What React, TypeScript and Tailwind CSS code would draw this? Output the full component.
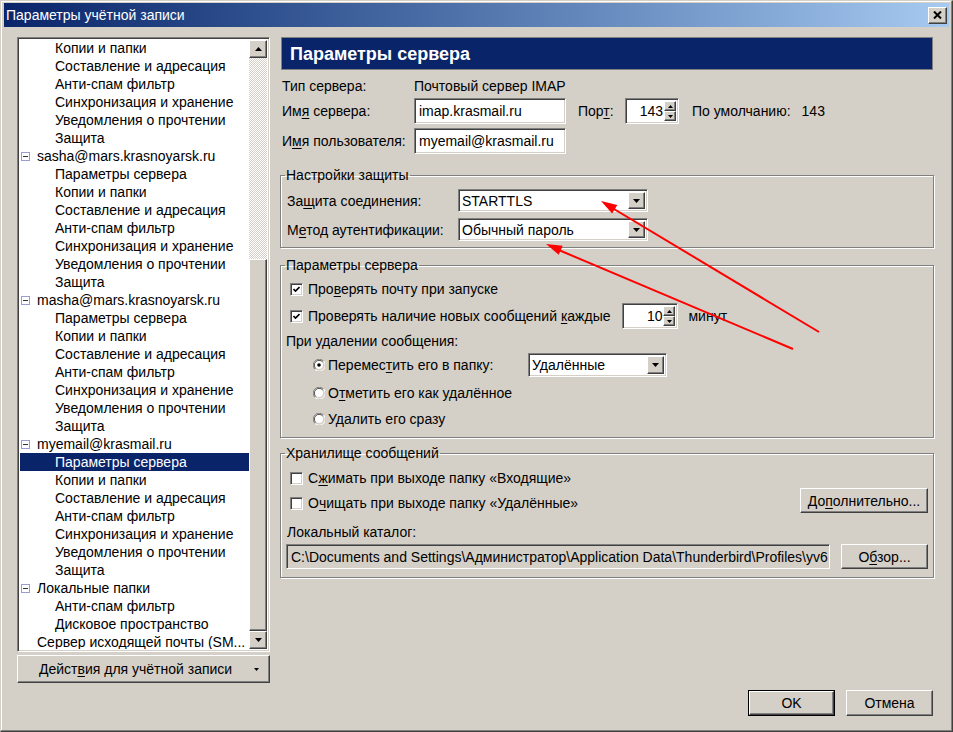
import React from 'react';

const raised =
  'border border-t-white border-l-white border-r-[#404040] border-b-[#404040] shadow-[inset_-1px_-1px_0_#808080,inset_1px_1px_0_#d4d0c8]';
const sunken =
  'border border-t-[#808080] border-l-[#808080] border-r-white border-b-white shadow-[inset_1px_1px_0_#404040,inset_-1px_-1px_0_#d4d0c8]';

function U({ children }: { children: React.ReactNode }) {
  return <span className="underline underline-offset-2">{children}</span>;
}

type TreeItem = { text: string; level: 0 | 1 | 2; box?: boolean; selected?: boolean };

const children = [
  'Параметры сервера',
  'Копии и папки',
  'Составление и адресация',
  'Анти-спам фильтр',
  'Синхронизация и хранение',
  'Уведомления о прочтении',
  'Защита',
];

const tree: TreeItem[] = [
  ...children.slice(1).map((t) => ({ text: t, level: 2 as const })),
  { text: 'sasha@mars.krasnoyarsk.ru', level: 1, box: true },
  ...children.map((t) => ({ text: t, level: 2 as const })),
  { text: 'masha@mars.krasnoyarsk.ru', level: 1, box: true },
  ...children.map((t) => ({ text: t, level: 2 as const })),
  { text: 'myemail@krasmail.ru', level: 1, box: true },
  ...children.map((t, i) => ({ text: t, level: 2 as const, selected: i === 0 })),
  { text: 'Локальные папки', level: 1, box: true },
  { text: 'Анти-спам фильтр', level: 2 },
  { text: 'Дисковое пространство', level: 2 },
  { text: 'Сервер исходящей почты (SM...', level: 1 },
];

function Triangle({ up, small }: { up?: boolean; small?: boolean }) {
  const w = small ? 5 : 7;
  const h = small ? 3 : 4;
  return (
    <svg width={w} height={h} viewBox={`0 0 ${w} ${h}`} className="block">
      <polygon points={up ? `0,${h} ${w},${h} ${w / 2},0` : `0,0 ${w},0 ${w / 2},${h}`} fill="#000" />
    </svg>
  );
}

function Select({ value, className }: { value: string; className: string }) {
  return (
    <div className={`${sunken} ${className} bg-white flex items-stretch p-[2px]`}>
      <div className="flex-1 flex items-center pl-[1px] truncate">{value}</div>
      <div className={`${raised} w-[17px] bg-[#d4d0c8] flex items-center justify-center`}>
        <Triangle />
      </div>
    </div>
  );
}

function Spin({ value, className }: { value: string; className: string }) {
  return (
    <div className={`${sunken} ${className} bg-white flex items-stretch p-[2px]`}>
      <div className="flex-1 flex items-center justify-end pr-[1px]">{value}</div>
      <div className="w-[12px] flex flex-col">
        <div className={`${raised} flex-1 bg-[#d4d0c8] flex items-center justify-center`}>
          <Triangle up small />
        </div>
        <div className={`${raised} flex-1 bg-[#d4d0c8] flex items-center justify-center`}>
          <Triangle small />
        </div>
      </div>
    </div>
  );
}

function Checkbox({ checked }: { checked?: boolean }) {
  return (
    <div className={`${sunken} w-[13px] h-[13px] bg-white flex items-center justify-center shrink-0`}>
      {checked && (
        <svg width="7" height="7" viewBox="0 0 7 7">
          <path d="M0.5 3 L2.5 5 L6.5 1" stroke="#000" strokeWidth="1.6" fill="none" />
        </svg>
      )}
    </div>
  );
}

function Radio({ checked }: { checked?: boolean }) {
  return (
    <svg width="12" height="12" viewBox="0 0 12 12" className="shrink-0">
      <path d="M10.5 2 A5.5 5.5 0 0 0 2 10.5" stroke="#808080" fill="none" />
      <path d="M2 10.5 A5.5 5.5 0 0 0 10.5 2" stroke="#fff" fill="none" />
      <path d="M9.6 2.9 A4.4 4.4 0 0 0 2.9 9.6" stroke="#404040" fill="none" />
      <circle cx="6" cy="6" r="4" fill="#fff" />
      {checked && <circle cx="6" cy="6" r="1.8" fill="#000" />}
    </svg>
  );
}

function Button({ children, className }: { children: React.ReactNode; className: string }) {
  return (
    <div className={`${raised} ${className} bg-[#d4d0c8] flex items-center justify-center`}>{children}</div>
  );
}

function Group({ title, children, className }: { title: string; children: React.ReactNode; className?: string }) {
  return (
    <fieldset
      className={`border border-[#808080] shadow-[inset_1px_1px_0_#fff,1px_1px_0_#fff] pl-[6px] pr-[5px] ${className ?? ''}`}
    >
      <legend className="-ml-[2px] px-[1px] leading-[16px]">{title}</legend>
      {children}
    </fieldset>
  );
}

function arrowHead(tx: number, ty: number, px: number, py: number) {
  const dx = px - tx;
  const dy = py - ty;
  const len = Math.hypot(dx, dy);
  const ux = dx / len;
  const uy = dy / len;
  const bx = px - ux * 16;
  const by = py - uy * 16;
  const nx = -uy * 5;
  const ny = ux * 5;
  return `${px},${py} ${bx + nx},${by + ny} ${bx - nx},${by - ny}`;
}

export default function App() {
  return (
    <div className="relative w-[953px] h-[732px] bg-[#d4d0c8] border border-t-[#d4d0c8] border-l-[#d4d0c8] border-r-[#404040] border-b-[#404040] shadow-[inset_-1px_-1px_0_#808080,inset_1px_1px_0_#fff] px-[3px] pt-[2px] font-['Liberation_Sans',Arial,sans-serif] text-[14px] text-black leading-[16px] overflow-hidden">
      {/* title bar */}
      <div className="h-[24px] bg-linear-to-r from-[#0a246a] to-[#a6caf0] flex items-center pl-[2px] pr-[2px]">
        <span className="text-white text-[14px]">Параметры учётной записи</span>
        <div className={`${raised} ml-auto w-[19px] h-[17px] bg-[#d4d0c8] flex items-center justify-center`}>
          <svg width="9" height="8" viewBox="0 0 9 8">
            <path d="M1 0.5 L8 7.5 M8 0.5 L1 7.5" stroke="#000" strokeWidth="2" />
          </svg>
        </div>
      </div>

      <div className="flex pt-[10px] pl-[13px] gap-[10px]">
        {/* left column */}
        <div className="w-[253px] flex flex-col">
          <div className={`${sunken} h-[615px] bg-white p-[2px] flex`}>
            <div className="flex-1 flex flex-col -mt-[1px] overflow-hidden">
              {tree.map((it, i) => (
                <div
                  key={i}
                  className={`h-[18px] shrink-0 flex items-center whitespace-nowrap ${
                    it.selected ? 'bg-[#0a246a] text-white' : ''
                  } ${it.level === 2 ? 'pl-[35px]' : it.box ? 'pl-[1px]' : 'pl-[17px]'}`}
                >
                  {it.box && (
                    <div className="w-[9px] h-[9px] border border-[#9c9cd6] bg-white mr-[7px] flex items-center justify-center">
                      <div className="w-[5px] h-[1px] bg-[#333]" />
                    </div>
                  )}
                  {it.text}
                </div>
              ))}
            </div>
            <div className="w-[18px] flex flex-col">
              <div className={`${raised} h-[18px] bg-[#d4d0c8] flex items-center justify-center`}>
                <Triangle up />
              </div>
              <div className="h-[201px] bg-[repeating-conic-gradient(#ffffff_0%_25%,#d4d0c8_0%_50%)] bg-[length:2px_2px]" />
              <div className={`${raised} flex-1 bg-[#d4d0c8]`} />
              <div className={`${raised} h-[18px] bg-[#d4d0c8] flex items-center justify-center`}>
                <Triangle />
              </div>
            </div>
          </div>
          <div className={`${raised} mt-[3px] h-[28px] bg-[#d4d0c8] flex items-center pl-[21px] pr-[10px]`}>
            <span>
              Дейст<U>в</U>ия для учётной записи
            </span>
            <span className="ml-auto">
              <Triangle small />
            </span>
          </div>
        </div>

        {/* right column */}
        <div className="w-[654px] h-[679px] flex flex-col">
          <div className="ml-[1px] w-[652px] h-[33px] bg-[#0a246a] border border-[#808080] flex items-center pl-[8px]">
            <span className="text-white font-bold text-[18px]">Параметры сервера</span>
          </div>

          <div className="mt-[8px] pl-[2px] flex items-center h-[16px]">
            <span className="w-[132px]">Тип сервера:</span>
            <span>Почтовый сервер IMAP</span>
          </div>
          <div className="mt-[4px] pl-[2px] flex items-center h-[26px]">
            <span className="w-[132px]">
              Им<U>я</U> сервера:
            </span>
            <div className={`${sunken} w-[152px] h-[26px] bg-white flex items-center pl-[4px]`}>imap.krasmail.ru</div>
            <span className="ml-[12px] w-[47px]">
              Пор<U>т</U>:
            </span>
            <Spin value="143" className="w-[54px] h-[26px]" />
            <span className="ml-[13px]">По умолчанию:</span>
            <span className="ml-[11px]">143</span>
          </div>
          <div className="mt-[4px] pl-[2px] flex items-center h-[26px]">
            <span className="w-[132px]">
              И<U>м</U>я пользователя:
            </span>
            <div className={`${sunken} w-[152px] h-[26px] bg-white flex items-center pl-[4px]`}>myemail@krasmail.ru</div>
          </div>

          <Group title="Настройки защиты" className="mt-[13px] pb-[6px]">
            <div className="mt-[6px] flex items-center h-[23px]">
              <span className="w-[171px]">
                За<U>щ</U>ита соединения:
              </span>
              <Select value="STARTTLS" className="w-[190px] h-[23px]" />
            </div>
            <div className="mt-[6px] flex items-center h-[23px]">
              <span className="w-[171px]">
                М<U>е</U>тод аутентификации:
              </span>
              <Select value="Обычный пароль" className="w-[190px] h-[23px]" />
            </div>
          </Group>

          <Group title="Параметры сервера" className="mt-[9px] pb-[8px]">
            <div className="mt-[6px] h-[20px] flex items-center gap-[5px] pl-[3px]">
              <Checkbox checked />
              <span>
                Про<U>в</U>ерять почту при запуске
              </span>
            </div>
            <div className="mt-[4px] h-[26px] flex items-center pl-[3px]">
              <Checkbox checked />
              <span className="ml-[5px]">
                Проверять наличие новых сообщений <U>к</U>аждые
              </span>
              <Spin value="10" className="ml-[12px] w-[56px] h-[26px]" />
              <span className="ml-[10px]">минут</span>
            </div>
            <div className="mt-[4px] h-[16px] flex items-center -ml-[1px]">При удалении сообщения:</div>
            <div className="mt-[4px] h-[24px] flex items-center pl-[26px]">
              <Radio checked />
              <span className="ml-[3px] w-[200px]">
                Перемес<U>т</U>ить его в папку:
              </span>
              <Select value="Удалённые" className="w-[139px] h-[24px]" />
            </div>
            <div className="mt-[6px] h-[20px] flex items-center pl-[26px] gap-[3px]">
              <Radio />
              <span>
                О<U>т</U>метить его как удалённое
              </span>
            </div>
            <div className="mt-[6px] h-[20px] flex items-center pl-[26px] gap-[3px]">
              <Radio />
              <span>
                У<U>д</U>алить его сразу
              </span>
            </div>
          </Group>

          <Group title="Хранилище сообщений" className="mt-[7px] pb-[8px]">
            <div className="mt-[7px] flex">
              <div className="flex flex-col">
                <div className="h-[20px] flex items-center gap-[5px] pl-[3px]">
                  <Checkbox />
                  <span>
                    С<U>ж</U>имать при выходе папку «Входящие»
                  </span>
                </div>
                <div className="mt-[5px] h-[20px] flex items-center gap-[5px] pl-[3px]">
                  <Checkbox />
                  <span>
                    О<U>ч</U>ищать при выходе папку «Удалённые»
                  </span>
                </div>
              </div>
              <Button className="ml-auto self-end w-[128px] h-[25px]">
                <span>
                  До<U>п</U>олнительно...
                </span>
              </Button>
            </div>
            <div className="mt-[11px] h-[16px] flex items-center">Локальный каталог:</div>
            <div className="mt-[4px] flex items-center">
              <div
                className={`${sunken} -ml-[1px] w-[544px] h-[25px] bg-[#d4d0c8] flex items-center pl-[4px] overflow-hidden whitespace-nowrap`}
              >
                C:\Documents and Settings\Администратор\Application Data\Thunderbird\Profiles\yv6
              </div>
              <Button className="ml-auto w-[87px] h-[25px]">
                <span>
                  О<U>б</U>зор...
                </span>
              </Button>
            </div>
          </Group>

          <div className="flex-1" />
          <div className="flex justify-end gap-[11px] pr-[1px]">
            <div className="w-[87px] h-[26px] border border-black">
              <Button className="w-full h-full">OK</Button>
            </div>
            <Button className="w-[87px] h-[26px]">Отмена</Button>
          </div>
        </div>
      </div>

      {/* red annotation arrows */}
      <svg className="absolute left-0 top-0 pointer-events-none" width="953" height="732">
        <line x1="818" y1="331" x2="608" y2="205" stroke="#ff0000" strokeWidth="2" />
        <polygon points={arrowHead(818, 331, 600, 200)} fill="#ff0000" />
        <line x1="792" y1="348" x2="553" y2="247" stroke="#ff0000" strokeWidth="2" />
        <polygon points={arrowHead(792, 348, 545, 243)} fill="#ff0000" />
      </svg>
    </div>
  );
}
